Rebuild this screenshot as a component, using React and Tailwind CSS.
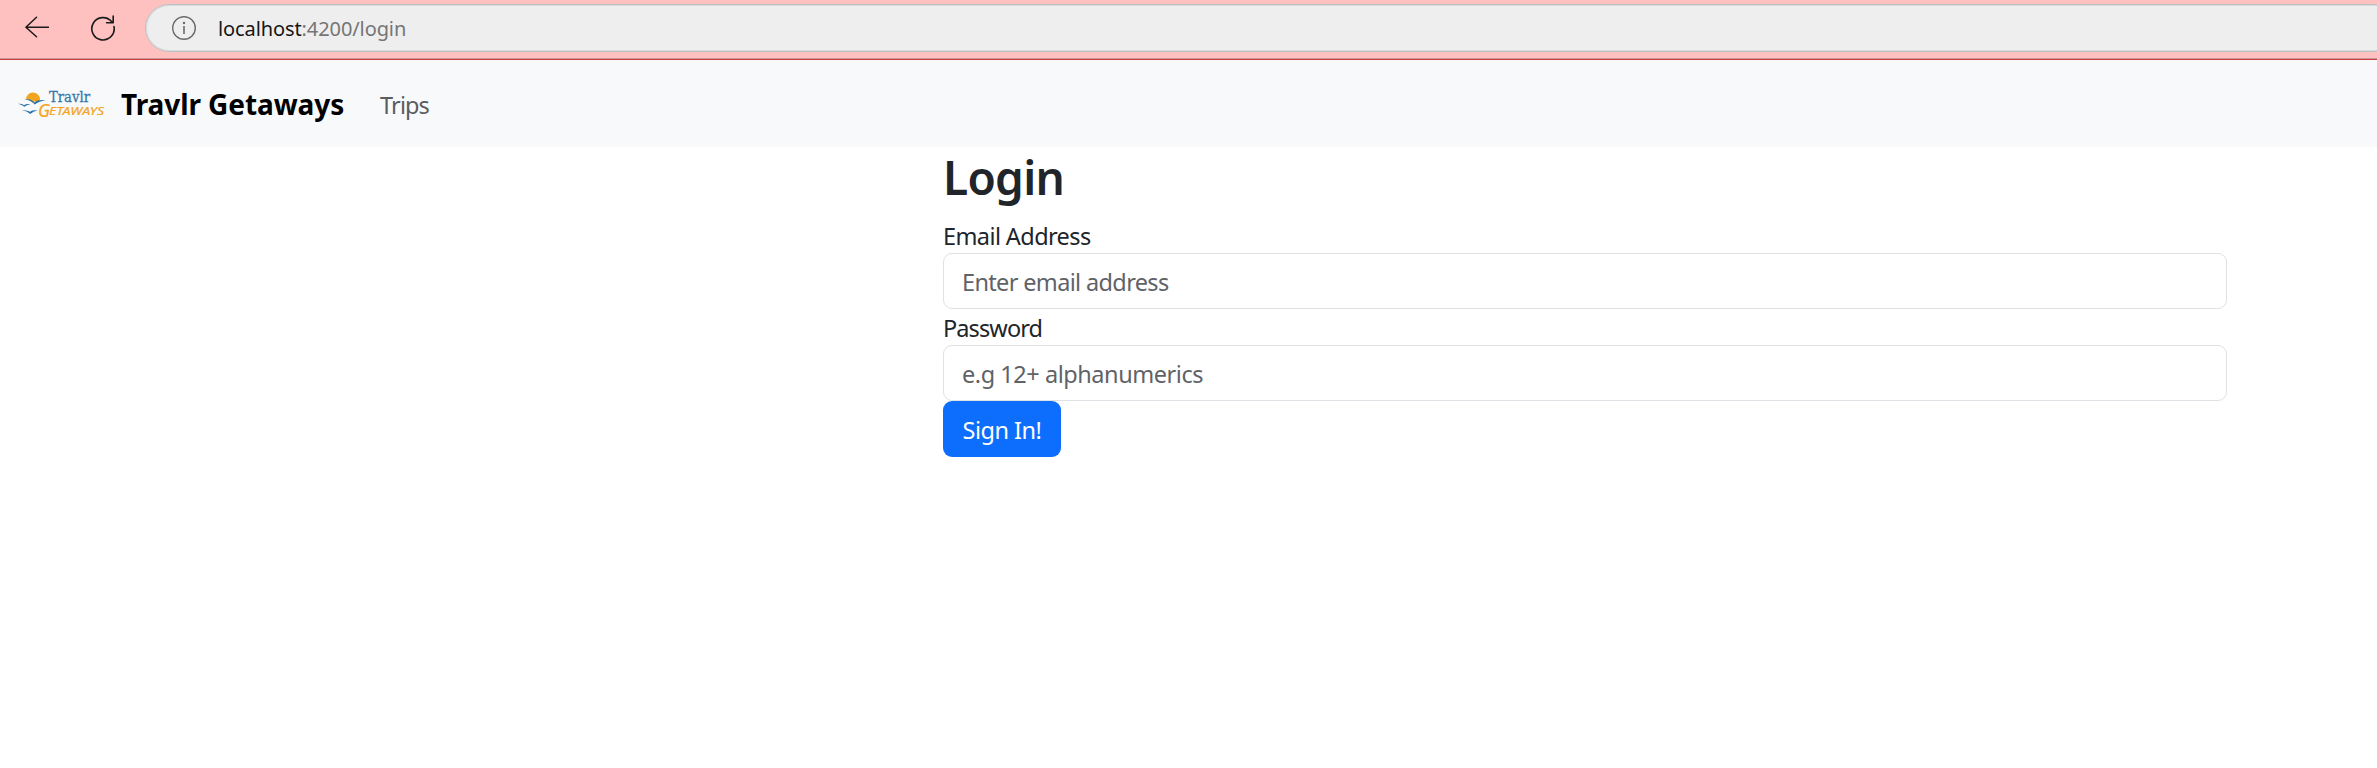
function BackIcon() {
  return (
    <svg width="24" height="22" viewBox="0 0 24 22" fill="none" stroke="#1b1b1b" strokeWidth="1.5" strokeLinecap="round" strokeLinejoin="round">
      <path d="M23.5 11.2H1M11.5 1.2L.9 11.2l10.6 9.6" />
    </svg>
  );
}

function ReloadIcon() {
  return (
    <svg width="26" height="26" viewBox="0 0 26 26" fill="none" stroke="#1b1b1b" strokeWidth="1.6" strokeLinecap="round" strokeLinejoin="round">
      <path d="M24 11.6A11.2 11.2 0 1 1 21.6 6.6M23.2 1v6.8H16.6" />
    </svg>
  );
}

function InfoIcon() {
  return (
    <svg width="26" height="26" viewBox="0 0 26 26" fill="none" stroke="#6b6b6b">
      <circle cx="13" cy="13" r="11.3" strokeWidth="1.4" />
      <path d="M13 11v8" strokeWidth="1.6" />
      <circle cx="13" cy="8" r="1.2" fill="#6b6b6b" stroke="none" />
    </svg>
  );
}

function Logo() {
  return (
    <svg width="88" height="36" viewBox="0 -3 88 36" overflow="visible">
      <path d="M8 10.5A7 7 0 0 1 22 10.5L20.5 12.5Q17 11 15 14Q12 10 8 10.5Z" fill="#f3a51f" />
      <g fill="#2c74ab">
        <path d="M6 10Q13 9.4 16.5 13.4Q19 10.4 27.5 11.2Q20 12.6 16.8 15.4Q13 11.4 6 10Z" />
        <path d="M0 14.8Q4 14.4 6 16.2Q8 14.6 12.5 15.3Q8.500 16 6.300 17.800Q4.200 15.700 0 14.800Z" />
        <path d="M4 21.200Q9.500 20.800 12 22.800Q14.500 20.800 19.500 21.600Q15 22.600 12.300 25Q9 22 4 21.200Z" />
      </g>
      <text x="31" y="12.500" textLength="41" lengthAdjust="spacingAndGlyphs" fontFamily="DejaVu Serif, serif" fontSize="14.500" fill="#3478ad" stroke="#3478ad" strokeWidth="0.3">Travlr</text>
      <g fontFamily="Noto Sans, sans-serif" fontStyle="italic" fill="#f3a51f" stroke="#f3a51f" strokeWidth="0.2">
        <text x="20" y="27.500" fontSize="18" textLength="12" lengthAdjust="spacingAndGlyphs">G</text>
        <text x="31" y="25.500" fontSize="11.500" textLength="55" lengthAdjust="spacingAndGlyphs">ETAWAYS</text>
      </g>
    </svg>
  );
}

export default function App() {
  return (
    <div className="min-h-screen bg-white font-['Noto_Sans','Open_Sans',sans-serif] text-[#212529]">
      <header className="flex h-[60px] items-start overflow-hidden border-b border-[#d13c41] bg-[#ffc0c0] shadow-[inset_0_-1px_0_#c49a9a]">
        <div className="mt-4 ml-[25px]"><BackIcon /></div>
        <div className="mt-[15px] ml-[41px]"><ReloadIcon /></div>
        <div className="mt-1 ml-[29px] -mr-10 flex h-12 flex-1 items-center rounded-l-full border border-[#bfc1c2] bg-[#eeeeee] pl-[25px] shadow-[inset_0_0_0_1px_#d8dadb]">
          <InfoIcon />
          <div className="ml-[21px] pt-0.5 text-[20px] tracking-[-0.1px] whitespace-nowrap text-[#757575]">
            <span className="text-[#161616]">localhost</span>:4200/login
          </div>
        </div>
      </header>
      <nav className="flex h-[87px] items-center bg-[#f8f9fb] pl-[18px]">
        <Logo />
        <a className="ml-[15px] pt-px text-[28px] leading-none font-bold tracking-[-0.08px] text-black">Travlr Getaways</a>
        <a className="ml-[36px] pt-[5px] text-[23.500px] leading-none tracking-[-0.9px] text-[#5c5d5f]">Trips</a>
      </nav>
      <main className="ml-[943px] flex w-[1284px] flex-col items-start">
        <h1 className="h-[70px] text-[46px] leading-[61px] font-semibold tracking-[-0.7px]">Login</h1>
        <label className="h-9 pt-px text-[23.500px] leading-9 tracking-[-0.6px]">Email Address</label>
        <input className="h-14 w-full rounded-[9px] border border-[#dee2e6] px-[18px] pt-[2px] text-[23.500px] tracking-[-0.65px] placeholder:text-[#5f6367]" placeholder="Enter email address" />
        <label className="h-9 pt-px text-[23.500px] leading-9 tracking-[-0.9px]">Password</label>
        <input className="h-14 w-full rounded-[9px] border border-[#dee2e6] px-[18px] pt-[2px] text-[23.500px] tracking-[-0.45px] placeholder:text-[#5f6367]" placeholder="e.g 12+ alphanumerics" />
        <button className="h-14 w-[118px] rounded-[9px] bg-[#0d6efd] pt-[3px] text-[23.500px] tracking-[-0.5px] whitespace-nowrap text-white">Sign In!</button>
      </main>
    </div>
  );
}
